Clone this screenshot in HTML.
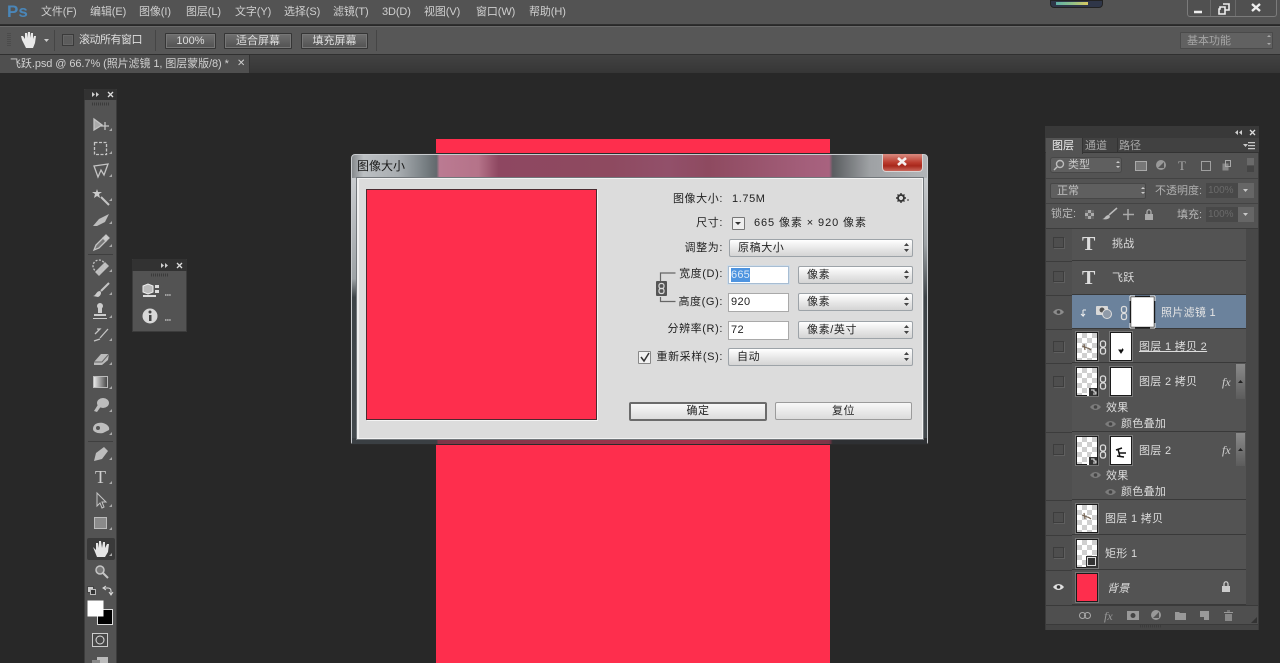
<!DOCTYPE html>
<html lang="zh"><head><meta charset="utf-8"><title>飞跃.psd</title>
<style>
html,body{margin:0;padding:0;width:1280px;height:663px;overflow:hidden;background:#282828}
body{position:relative;font-family:"Liberation Sans","Noto Sans CJK SC",sans-serif;filter:blur(.35px)}
div,span{position:absolute;box-sizing:border-box}
.t{white-space:nowrap;font-size:11px;line-height:14px;color:#cfcfcf}
.d{color:#222;font-size:11px;line-height:14px;white-space:nowrap;letter-spacing:.6px}
.r{text-align:right}
.btn{background:linear-gradient(#6f6f6f,#525252);border:1px solid #353535;box-shadow:inset 0 0 0 1px #767676;color:#ddd;font-size:11px;line-height:14px;text-align:center;border-radius:1px}
.sel{background:linear-gradient(#fff,#e6e6e6 55%,#d4d4d4);border:1px solid #9da3a8;border-radius:2px;color:#222;font-size:11px;line-height:16px;padding-left:8px;letter-spacing:.6px;white-space:nowrap}
.inp{background:#fff;border:1px solid #a9a9a9;color:#222;font-size:11px;line-height:16px;padding-left:2px;letter-spacing:.4px}
.ck{left:1053px;width:11px;height:11px;border:1px solid #3d3d3d;background:#4e4e4e;box-shadow:1px 1px 0 #5f5f5f}
.row{left:1072px;width:174px;background:#535353;border-bottom:1px solid #393939}
.th{width:22px;height:29px;background-color:#fff;border:1px solid #1c1c1c;box-shadow:0 0 0 1px #777}
.chk{background-image:conic-gradient(#cfcfcf 25%,#fff 0 50%,#cfcfcf 0 75%,#fff 0);background-size:10px 10px}
.ly{font-size:11px;line-height:14px;color:#dcdcdc;white-space:nowrap;letter-spacing:.3px}
</style></head><body>

<!-- menu bar -->
<div style="left:0;top:0;width:1280px;height:25px;background:#535353;border-bottom:1px solid #2f2f2f"></div>
<div class="t" style="left:7px;top:1px;font-size:17px;line-height:22px;font-weight:bold;color:#4a86b8">Ps</div>
<span class="t" style="left:41px;top:5px;letter-spacing:-.1px">文件(F)</span>
<span class="t" style="left:90px;top:5px;letter-spacing:-.1px">编辑(E)</span>
<span class="t" style="left:139px;top:5px;letter-spacing:-.1px">图像(I)</span>
<span class="t" style="left:186px;top:5px;letter-spacing:-.1px">图层(L)</span>
<span class="t" style="left:235px;top:5px;letter-spacing:-.1px">文字(Y)</span>
<span class="t" style="left:284px;top:5px;letter-spacing:-.1px">选择(S)</span>
<span class="t" style="left:333px;top:5px;letter-spacing:-.1px">滤镜(T)</span>
<span class="t" style="left:382px;top:5px;letter-spacing:-.1px">3D(D)</span>
<span class="t" style="left:424px;top:5px;letter-spacing:-.1px">视图(V)</span>
<span class="t" style="left:476px;top:5px;letter-spacing:-.1px">窗口(W)</span>
<span class="t" style="left:529px;top:5px;letter-spacing:-.1px">帮助(H)</span>
<div style="left:1050px;top:0;width:53px;height:8px;background:#2f3648;border-radius:0 0 4px 4px;border:1px solid #222"></div>
<div style="left:1056px;top:2px;width:32px;height:3px;background:linear-gradient(90deg,#5fb0a8,#8fc08a,#d8c860)"></div>
<div style="left:1187px;top:0;width:90px;height:17px;background:#505050;border:1px solid #7b7b7b;border-top:0;border-radius:0 0 3px 3px"></div>
<div style="left:1210px;top:0;width:1px;height:16px;background:#6a6a6a"></div>
<div style="left:1235px;top:0;width:1px;height:16px;background:#6a6a6a"></div>

<!-- options bar -->
<div style="left:0;top:26px;width:1280px;height:29px;background:#575757;border-top:1px solid #6a6a6a;border-bottom:1px solid #303030"></div>
<div style="left:54px;top:30px;width:1px;height:21px;background:#454545"></div>
<div style="left:155px;top:30px;width:1px;height:21px;background:#454545"></div>
<div style="left:376px;top:30px;width:1px;height:21px;background:#454545"></div>
<div style="left:62px;top:34px;width:12px;height:12px;background:#5c5c5c;border:1px solid #3a3a3a;box-shadow:inset 0 0 0 1px #666"></div>
<span class="t" style="left:79px;top:33px;letter-spacing:-.5px;color:#dedede">滚动所有窗口</span>
<div class="btn" style="left:165px;top:33px;width:51px;height:16px;line-height:15px">100%</div>
<div class="btn" style="left:224px;top:33px;width:68px;height:16px;line-height:14px">适合屏幕</div>
<div class="btn" style="left:301px;top:33px;width:67px;height:16px;line-height:14px">填充屏幕</div>
<div style="left:1180px;top:32px;width:93px;height:17px;background:#616161;border:1px solid #4a4a4a;border-radius:1px"></div>
<span class="t" style="left:1187px;top:34px;color:#a5a5a5">基本功能</span>

<!-- tabs -->
<div style="left:0;top:55px;width:1280px;height:18px;background:linear-gradient(#424242,#363636)"></div>
<div style="left:0;top:55px;width:250px;height:18px;background:#4f4f4f;border-right:1px solid #333"></div>
<span class="t" style="left:10px;top:57px;color:#d0d0d0;letter-spacing:-.08px">飞跃.psd @ 66.7% (照片滤镜 1, 图层蒙版/8) *</span>
<span class="t" style="left:237px;top:57px;font-size:10px">✕</span>

<!-- canvas image -->
<div style="left:436px;top:139px;width:394px;height:524px;background:#fe2e4d"></div>

<!-- toolbar -->
<div style="left:84px;top:89px;width:33px;height:574px;background:#535353;border-left:1px solid #3c3c3c;border-right:1px solid #3c3c3c"></div>
<div style="left:84px;top:89px;width:33px;height:11px;background:#323232;border-radius:2px 2px 0 0"></div>
<div style="left:88px;top:254px;width:25px;height:1px;background:#3f3f3f"></div>
<div style="left:88px;top:441px;width:25px;height:1px;background:#3f3f3f"></div>
<div style="left:87px;top:538px;width:28px;height:22px;background:#3a3a3a;border-radius:2px"></div>

<!-- mini panel -->
<div style="left:132px;top:259px;width:55px;height:73px;background:#535353;border:1px solid #3c3c3c"></div>
<div style="left:132px;top:259px;width:55px;height:12px;background:#323232;border-radius:2px 2px 0 0"></div>

<!-- layers panel -->
<div style="left:1045px;top:126px;width:214px;height:504px;background:#535353;border:1px solid #3b3b3b"></div>
<div style="left:1045px;top:126px;width:214px;height:12px;background:#393939"></div>
<div style="left:1045px;top:138px;width:214px;height:15px;background:#414141;border-bottom:1px solid #333"></div>
<div style="left:1046px;top:138px;width:37px;height:16px;background:#535353;border-right:1px solid #333"></div>
<div style="left:1083px;top:138px;width:35px;height:15px;border-right:1px solid #333"></div>
<span class="t" style="left:1052px;top:139px;color:#eee;font-size:11px">图层</span>
<span class="t" style="left:1085px;top:139px;color:#a8a8a8;font-size:11px">通道</span>
<span class="t" style="left:1119px;top:139px;color:#a8a8a8;font-size:11px">路径</span>
<div style="left:1050px;top:157px;width:72px;height:16px;background:#5f5f5f;border:1px solid #474747;border-radius:3px"></div>
<span class="t" style="left:1068px;top:158px;color:#c8c8c8">类型</span>
<div style="left:1046px;top:178px;width:212px;height:1px;background:#434343"></div>
<div style="left:1050px;top:183px;width:96px;height:16px;background:#5f5f5f;border:1px solid #474747;border-radius:2px"></div>
<span class="t" style="left:1057px;top:184px;color:#c0c0c0">正常</span>
<span class="t" style="left:1155px;top:184px;color:#b0b0b0">不透明度:</span>
<div style="left:1206px;top:183px;width:32px;height:15px;background:#484848"></div>
<span class="t" style="left:1208px;top:184px;color:#6a6a6a;font-size:10px">100%</span>
<div style="left:1238px;top:183px;width:16px;height:15px;background:#666"></div>
<div style="left:1046px;top:203px;width:212px;height:1px;background:#434343"></div>
<span class="t" style="left:1051px;top:207px;color:#b8b8b8">锁定:</span>
<span class="t" style="left:1177px;top:208px;color:#b8b8b8">填充:</span>
<div style="left:1206px;top:207px;width:32px;height:15px;background:#484848"></div>
<span class="t" style="left:1208px;top:208px;color:#6a6a6a;font-size:10px">100%</span>
<div style="left:1238px;top:207px;width:16px;height:15px;background:#666"></div>
<div style="left:1046px;top:228px;width:212px;height:1px;background:#3c3c3c"></div>

<div style="left:1046px;top:229px;width:26px;height:376px;background:#4f4f4f"></div>
<div style="left:1246px;top:229px;width:12px;height:376px;background:#484848"></div>
<div style="left:1072px;top:229px;width:1px;height:376px;background:#3a3a3a"></div>

<div class="row" style="top:229px;height:32px"></div>
<div class="row" style="top:261px;height:34px"></div>
<div class="row" style="top:295px;height:34px;background:#6b829c"></div>
<div class="row" style="top:329px;height:34px"></div>
<div class="row" style="top:363px;height:69px"></div>
<div class="row" style="top:432px;height:68px"></div>
<div class="row" style="top:500px;height:35px"></div>
<div class="row" style="top:535px;height:35px"></div>
<div class="row" style="top:570px;height:35px"></div>
<div style="left:1046px;top:261px;width:26px;height:1px;background:#3c3c3c"></div>
<div style="left:1046px;top:295px;width:26px;height:1px;background:#3c3c3c"></div>
<div style="left:1046px;top:329px;width:26px;height:1px;background:#3c3c3c"></div>
<div style="left:1046px;top:363px;width:26px;height:1px;background:#3c3c3c"></div>
<div style="left:1046px;top:432px;width:26px;height:1px;background:#3c3c3c"></div>
<div style="left:1046px;top:500px;width:26px;height:1px;background:#3c3c3c"></div>
<div style="left:1046px;top:535px;width:26px;height:1px;background:#3c3c3c"></div>
<div style="left:1046px;top:570px;width:26px;height:1px;background:#3c3c3c"></div>

<div class="ck" style="top:237px"></div>
<div class="ck" style="top:271px"></div>
<div class="ck" style="top:341px"></div>
<div class="ck" style="top:376px"></div>
<div class="ck" style="top:444px"></div>
<div class="ck" style="top:512px"></div>
<div class="ck" style="top:547px"></div>

<span class="ly" style="left:1112px;top:237px">挑战</span>
<span class="ly" style="left:1112px;top:271px">飞跃</span>
<span class="ly" style="left:1161px;top:306px;color:#e4e4e4">照片滤镜 1</span>

<div class="th chk" style="left:1076px;top:332px"></div>
<div class="th" style="left:1110px;top:332px"></div>
<span class="ly" style="left:1139px;top:340px;text-decoration:underline">图层 1 拷贝 2</span>
<div class="th chk" style="left:1076px;top:367px"></div>
<div class="th" style="left:1110px;top:367px"></div>
<span class="ly" style="left:1139px;top:375px">图层 2 拷贝</span>
<span class="ly" style="left:1106px;top:401px">效果</span>
<span class="ly" style="left:1121px;top:417px">颜色叠加</span>
<div class="th chk" style="left:1076px;top:436px"></div>
<div class="th" style="left:1110px;top:436px"></div>
<span class="ly" style="left:1139px;top:444px">图层 2</span>
<span class="ly" style="left:1106px;top:469px">效果</span>
<span class="ly" style="left:1121px;top:485px">颜色叠加</span>
<div class="th chk" style="left:1076px;top:504px"></div>
<span class="ly" style="left:1105px;top:512px">图层 1 拷贝</span>
<div class="th chk" style="left:1076px;top:539px"></div>
<span class="ly" style="left:1105px;top:547px">矩形 1</span>
<div class="th" style="left:1076px;top:573px;background:#fe2e4d"></div>
<span class="ly" style="left:1107px;top:582px;font-style:italic">背景</span>
<div style="left:1236px;top:364px;width:9px;height:35px;background:linear-gradient(#8a8a8a,#5c5c5c)"></div>
<div style="left:1236px;top:433px;width:9px;height:33px;background:linear-gradient(#8a8a8a,#5c5c5c)"></div>
<div style="left:1046px;top:605px;width:212px;height:20px;background:#4f4f4f;border-top:1px solid #3a3a3a"></div>
<div style="left:1046px;top:624px;width:212px;height:6px;background:#454545;border-top:1px solid #3a3a3a"></div>

<!-- dialog -->
<div style="left:351px;top:154px;width:577px;height:290px;border:1px solid #c8cbce;border-radius:4px 4px 2px 2px;box-shadow:0 0 0 1px #2b2b2b;background:linear-gradient(90deg,#85898c 0,#bcc0c3 2%,#a9adb1 8%,#7f868a 12%,#62696d 14.7%,#bb7a92 15.2%,#b57389 22%,#8e4761 25.5%,#8e4a60 45%,#92506a 55%,#8e4a60 62%,#a5607c 80%,#a8627f 83%,#5a5d60 83.6%,#9ea1a4 90%,#b2b5b8 100%)"></div>
<div style="left:352px;top:178px;width:5px;height:265px;background:linear-gradient(#c9cccf,#9ea3a6 38%,#3d4347 45%,#42484c 100%)"></div>
<div style="left:923px;top:178px;width:4px;height:265px;background:linear-gradient(#c9cccf,#9ea3a6 25%,#3d4347 45%,#42484c 100%)"></div>
<div style="left:352px;top:438px;width:575px;height:6px;background:linear-gradient(90deg,#3a3f43 0,#3a3f43 14.7%,#7c3648 15%,#a8324c 60%,#7c3648 83%,#2e3033 83.6%)"></div>
<div style="left:357px;top:178px;width:566px;height:261px;background:#dcdcdc;border:1px solid #f2f2f2;border-left:2px solid #f0f0f0;box-shadow:0 0 0 1px #72777b"></div>
<span class="t" style="left:357px;top:158px;color:#1a1a1a;font-size:12px;line-height:16px">图像大小</span>
<div style="left:882px;top:154px;width:41px;height:18px;border:1px solid #d9d3d3;border-top:0;border-radius:0 0 4px 4px;background:linear-gradient(#d98b80,#bb3c2e 50%,#a8281c 70%,#c9675b)"></div>
<div style="left:366px;top:189px;width:231px;height:231px;background:#fe2e4d;border:1px solid #4c2a30;box-shadow:1px 1px 0 #f4f4f4"></div>

<span class="d r" style="left:640px;width:83px;top:192px">图像大小:</span>
<span class="d" style="left:732px;top:192px">1.75M</span>
<span class="d r" style="left:640px;width:83px;top:216px">尺寸:</span>
<div style="left:732px;top:217px;width:13px;height:13px;background:#eee;border:1px solid #777;border-radius:1px"></div>
<span class="d" style="left:754px;top:216px;letter-spacing:.9px">665 像素 × 920 像素</span>
<span class="d r" style="left:640px;width:83px;top:241px">调整为:</span>
<div class="sel" style="left:729px;top:239px;width:184px;height:18px">原稿大小</div>
<span class="d r" style="left:640px;width:83px;top:267px">宽度(D):</span>
<div class="inp" style="left:728px;top:266px;width:61px;height:18px;border-color:#a7bdd3;box-shadow:0 0 0 1px #cfdbe6"></div>
<div style="left:731px;top:268px;width:19px;height:14px;background:#4e94e0"></div>
<span class="d" style="left:731px;top:268px;color:#dbe9f8;letter-spacing:.2px">665</span>
<div class="sel" style="left:798px;top:266px;width:115px;height:18px">像素</div>
<span class="d r" style="left:640px;width:83px;top:295px">高度(G):</span>
<div class="inp" style="left:728px;top:293px;width:61px;height:19px">920</div>
<div class="sel" style="left:798px;top:293px;width:115px;height:18px">像素</div>
<span class="d r" style="left:640px;width:83px;top:322px">分辨率(R):</span>
<div class="inp" style="left:728px;top:321px;width:61px;height:19px">72</div>
<div class="sel" style="left:798px;top:321px;width:115px;height:18px">像素/英寸</div>
<div style="left:638px;top:351px;width:13px;height:13px;background:#f2f2f2;border:1px solid #888;border-radius:1px"></div>
<span class="d r" style="left:640px;width:83px;top:350px">重新采样(S):</span>
<div class="sel" style="left:728px;top:348px;width:185px;height:18px">自动</div>
<div style="left:629px;top:402px;width:138px;height:19px;background:linear-gradient(#f8f8f8,#dcdcdc);border:2px solid #6b6b6b;border-radius:2px;color:#222;font-size:11px;line-height:15px;text-align:center;letter-spacing:.5px">确定</div>
<div style="left:775px;top:402px;width:137px;height:18px;background:linear-gradient(#f8f8f8,#dcdcdc);border:1px solid #9b9b9b;border-radius:2px;color:#222;font-size:11px;line-height:16px;text-align:center;letter-spacing:.5px">复位</div>

<!-- icons -->
<svg width="1280" height="663" viewBox="0 0 1280 663" style="position:absolute;left:0;top:0">
<g fill="none" stroke="#eee" stroke-width="1.6">
<path d="M1194 12h8" stroke-width="2.500"/>
<path d="M1220 7h5v7h-6v-5h1zM1223 4h6v6h-4"/>
<path d="M1252 4l8 7M1260 4l-8 7" stroke-width="2.400"/>
</g>
<!-- option hand -->
<path d="M22 40l-1-4 2 0 2 3 0-6 2 0 0 5 1-6 2 0 0 6 1-5 2 0 0 6 1-3 2 0-1 7-2 5h-7z" fill="#e8e8e8"/>
<path d="M44 39h5l-2.500 3z" fill="#ccc"/>
<path d="M1267 37l2-2 2 2zM1267 43l2 2 2-2z" fill="#aaa"/>
<path d="M8 33v14M10 33v14" stroke="#3f3f3f" stroke-dasharray="1 1"/>
<!-- headers -->
<g fill="#cfcfcf">
<path d="M92 92l3 2.500-3 2.500zM96 92l3 2.500-3 2.500zM161 263l3 2.500-3 2.500zM165 263l3 2.500-3 2.500zM1238 130l-3 2.500 3 2.500zM1242 130l-3 2.500 3 2.500z"/>
</g>
<g stroke="#ddd" stroke-width="1.300" fill="none">
<path d="M108 92l5 5M113 92l-5 5M177 263l5 5M182 263l-5 5M1250 130l5 5M1255 130l-5 5"/>
</g>
<path d="M92 104h18M151 275h17M1140 626h22" stroke="#3b3b3b" stroke-width="3" stroke-dasharray="1 1"/>
<!-- tools -->
<g fill="none" stroke="#c4c4c4" stroke-width="1.300">
<path d="M94 119l8 6-8 5z" fill="#aaa"/>
<path d="M105 122v8M101 126h8"/>
<rect x="94.500" y="142.500" width="12" height="12" stroke-dasharray="3 1.500"/>
<path d="M94 166l14-2-4 11-3-5-3 7z"/>
<path d="M101 197l8 8" stroke-width="2"/>
<path d="M97 189l1 3 4 0-3 2 1 4-3-2-3 2 1-4-3-2 4 0z" fill="#ccc" stroke="none"/>
<path d="M93 226l6-7 10-5-4 8-8 4z" fill="#bdbdbd" stroke="none"/>
<path d="M94 250l2-5 7-7 3 3-7 7z" fill="#777"/>
<path d="M103 238l3-3 3 3-3 3z" fill="#ccc"/>
<path d="M95 272l10-10 4 4-10 10z" fill="#bdbdbd" stroke="none"/>
<circle cx="99" cy="266" r="6" stroke-dasharray="2 1.500"/>
<path d="M109 283l-8 8" stroke-width="2"/>
<path d="M93 296c3 0 3-5 7-5 2 1 1 5-2 6z" fill="#ccc" stroke="none"/>
<circle cx="100" cy="306" r="3" fill="#ccc" stroke="none"/>
<path d="M98 308h4v5h-4zM94 314h12v2h-12zM93 318h14v1h-14z" fill="#ccc" stroke="none"/>
<path d="M95 334l5-5h-3M108 329l-8 9M94 341l6-2"/>
<path d="M94 362l7-8h8l-1 6-6 5h-8z" fill="#bbb" stroke="none"/>
<path d="M94 362h8l7-8" stroke="#666" stroke-width="1"/>
</g>
<defs><linearGradient id="g"><stop offset="0" stop-color="#eee"/><stop offset="1" stop-color="#444"/></linearGradient></defs>
<rect x="93.500" y="376.500" width="14" height="11" fill="url(#g)" stroke="#bbb"/>
<g fill="#bdbdbd">
<ellipse cx="103" cy="403" rx="6" ry="5"/>
<path d="M94 411l5-8 3 2-5 7z"/>
<path d="M93 429c0-5 5-7 10-6 4 1 7 4 6 7l-6 3c-5 1-10-1-10-4z"/>
<circle cx="98" cy="428" r="2" fill="#555"/>
<path d="M94 461l2-8 8-6 4 4-6 8z"/>
<path d="M93 547l3 3 0-7 2 0 1 5 0-7 2 0 1 7 1-6 2 0 0 6 2-4 2 0-1 8-3 5h-8z" fill="#e4e4e4"/>
</g>
<text x="95" y="483" font-family="Liberation Serif,serif" font-size="18" fill="#cfcfcf">T</text>
<path d="M97 493v13l3-3 2 5 2-1-2-5h4z" fill="#555" stroke="#c4c4c4"/>
<rect x="94.500" y="517.500" width="12" height="11" fill="#8a8a8a" stroke="#bbb"/>
<circle cx="100" cy="570" r="4" fill="#777" stroke="#c4c4c4" stroke-width="1.500"/>
<path d="M103 573l5 5" stroke="#c4c4c4" stroke-width="2"/>
<path d="M112 131l-3 0 3-3zM112 154l-3 0 3-3zM112 177l-3 0 3-3zM112 201l-3 0 3-3zM112 224l-3 0 3-3zM112 247l-3 0 3-3zM112 272l-3 0 3-3zM112 295l-3 0 3-3zM112 318l-3 0 3-3zM112 341l-3 0 3-3zM112 365l-3 0 3-3zM112 389l-3 0 3-3zM112 412l-3 0 3-3zM112 435l-3 0 3-3zM112 460l-3 0 3-3zM112 484l-3 0 3-3zM112 507l-3 0 3-3zM112 530l-3 0 3-3zM112 556l-3 0 3-3z" fill="#aaa"/>
<!-- swatches -->
<rect x="87.500" y="586.500" width="6" height="6" fill="#ccc" stroke="#444"/>
<rect x="90.500" y="589.500" width="5" height="5" fill="#333" stroke="#bbb"/>
<path d="M104 588h4c2 0 3 1 3 3v3M106 586l-3 2 3 2M109 592l2 3 2-3" stroke="#ddd" fill="none"/>
<rect x="97.500" y="609.500" width="15" height="15" fill="#000" stroke="#ddd"/>
<rect x="87.500" y="600.500" width="16" height="16" fill="#fff"/>
<rect x="92.500" y="633.500" width="15" height="13" fill="#484848" stroke="#ccc"/>
<circle cx="100" cy="640" r="4" fill="none" stroke="#ddd"/>
<rect x="97" y="657" width="11" height="6" fill="#bbb"/><rect x="92" y="660" width="8" height="3" fill="#888"/>
<!-- mini panel icons -->
<path d="M143 286l5-2 5 2v6l-5 2-5-2z" fill="#bbb" stroke="#eee"/>
<path d="M155 285h4v3h-4zM155 290h4v3h-4z" fill="#ddd"/><path d="M143 295h13v2h-13z" fill="#ddd"/>
<circle cx="150" cy="316" r="7.500" fill="#d8d8d8"/><rect x="149" y="315" width="2.500" height="6" fill="#444"/><circle cx="150" cy="312" r="1.500" fill="#444"/>
<path d="M165 295h6M165 320h6" stroke="#bbb" stroke-width="1.600" stroke-dasharray="1.500 .6"/>
<!-- layers top icons -->
<circle cx="1060" cy="164" r="3.500" fill="none" stroke="#bbb" stroke-width="1.400"/><path d="M1057 167l-3 3" stroke="#bbb" stroke-width="1.400"/>
<path d="M1116 163l2-2 2 2zM1116 166l2 2 2-2zM1141 189l2-2 2 2zM1141 192l2 2 2-2z" fill="#ccc"/>
<rect x="1135.500" y="161.500" width="11" height="9" fill="#777" stroke="#aaa"/>
<circle cx="1161" cy="165" r="5" fill="#999"/><path d="M1158 168l6-6v6z" fill="#555"/>
<text x="1178" y="170" font-family="Liberation Serif,serif" font-size="13" fill="#a8a8a8">T</text>
<rect x="1201.500" y="161.500" width="9" height="9" fill="none" stroke="#a0a0a0"/>
<rect x="1222.500" y="163.500" width="6" height="7" fill="#888"/><rect x="1225.500" y="160.500" width="5" height="6" fill="none" stroke="#aaa"/>
<rect x="1247" y="158" width="7" height="7" fill="#6a6a6a"/><rect x="1247" y="166" width="7" height="6" fill="#454545"/>
<path d="M1243 144h5l-2.500 3z M1248 142h7v1.200h-7zM1248 145h7v1.200h-7zM1248 148h7v1.200h-7z" fill="#c8c8c8"/>
<path d="M1243 189h5l-2.500 3zM1243 213h5l-2.500 3z" fill="#c8c8c8"/>
<!-- lock icons -->
<rect x="1085" y="210" width="9" height="9" fill="#aaa"/><path d="M1085 210h3v3h-3zM1091 210h3v3h-3zM1088 213h3v3h-3zM1085 216h3v3h-3zM1091 216h3v3h-3z" fill="#666"/>
<path d="M1117 208l-8 7" stroke="#bbb" stroke-width="1.500"/><path d="M1102 219c3 0 3-4 7-4l1 2c-1 2-4 3-8 2z" fill="#bbb"/>
<path d="M1128 209v11M1123 214.500h11" stroke="#aaa" stroke-width="1.500"/>
<rect x="1145" y="214" width="8" height="6" fill="#aaa"/><path d="M1147 214v-2c0-3 4-3 4 0v2" fill="none" stroke="#aaa" stroke-width="1.300"/>
<!-- layer T icons -->
<text x="1082" y="250" font-family="Liberation Serif,serif" font-size="20" font-weight="bold" fill="#ddd">T</text>
<text x="1082" y="284" font-family="Liberation Serif,serif" font-size="20" font-weight="bold" fill="#ddd">T</text>
<!-- selected layer row -->
<path d="M1083 310v6l-2-2M1083 316l2-2M1083 310h3" stroke="#eee" fill="none"/>
<rect x="1096" y="306" width="12" height="9" rx="1" fill="#d8d8d8"/><circle cx="1102" cy="310" r="2.500" fill="#555"/>
<circle cx="1107" cy="314" r="4.500" fill="#8f9aa8" stroke="#ddd"/>
<rect x="1121.500" y="306.500" width="5" height="6" rx="2" fill="none" stroke="#ddd" stroke-width="1.300"/><rect x="1121.500" y="313.500" width="5" height="6" rx="2" fill="none" stroke="#ddd" stroke-width="1.300"/>
<rect x="1130.500" y="296.500" width="24" height="31" fill="#fff" stroke="#1b1b1b" stroke-width="1.400"/>
<path d="M1130 296h5M1150 296h5M1130 328h5M1150 328h5M1130 296v5M1155 296v5M1130 323v5M1155 323v5" stroke="#eee"/>
<!-- link icons for rows -->
<g fill="none" stroke="#ddd" stroke-width="1.300">
<rect x="1100.500" y="341" width="5" height="6" rx="2"/><rect x="1100.500" y="348" width="5" height="6" rx="2"/>
<rect x="1100.500" y="376" width="5" height="6" rx="2"/><rect x="1100.500" y="383" width="5" height="6" rx="2"/>
<rect x="1100.500" y="445" width="5" height="6" rx="2"/><rect x="1100.500" y="452" width="5" height="6" rx="2"/>
</g>
<!-- thumbnail art -->
<path d="M1119 350l4 0-2 3zM1122 349h1" stroke="#111" fill="#111"/>
<path d="M1118 449l2 8M1119 453h7M1116 450l6-2M1117 456l7 1" stroke="#111" stroke-width="1.500"/>
<path d="M1082 346l8 3M1084 344l1 6M1088 348l3 2" stroke="#765" stroke-width="1.200"/>
<path d="M1082 515l8 3M1084 513l1 6M1088 517l3 2" stroke="#765" stroke-width="1.200"/>
<path d="M1087 396v-5h4v-6h6v11z" fill="#fff"/><rect x="1089" y="388" width="8" height="8" fill="#333"/><path d="M1091 390h3v2h2v2h-3" stroke="#eee" fill="none"/>
<path d="M1087 465v-5h4v-6h6v11z" fill="#fff"/><rect x="1089" y="457" width="8" height="8" fill="#333"/><path d="M1091 459h3v2h2v2h-3" stroke="#eee" fill="none"/>
<rect x="1086" y="556" width="12" height="12" fill="#333"/><rect x="1087.500" y="557.500" width="8" height="8" fill="none" stroke="#ddd"/>
<!-- fx -->
<g font-family="Liberation Serif,serif" font-style="italic" font-size="12" fill="#cfcfcf">
<text x="1222" y="386">fx</text><text x="1222" y="454">fx</text>
</g>
<path d="M1238 383l2.500-3 2.500 3zM1238 451l2.500-3 2.500 3z" fill="#222"/>
<!-- eyes -->
<g>
<path d="M1053 312c3-4 8-4 11 0-3 4-8 4-11 0z" fill="#8c8c8c"/><circle cx="1058.500" cy="312" r="1.800" fill="#444"/>
<path d="M1090 407c3-4 8-4 11 0-3 4-8 4-11 0z" fill="#7c7c7c"/><circle cx="1095.500" cy="407" r="1.800" fill="#444"/>
<path d="M1105 424c3-4 8-4 11 0-3 4-8 4-11 0z" fill="#7c7c7c"/><circle cx="1110.500" cy="424" r="1.800" fill="#444"/>
<path d="M1090 475c3-4 8-4 11 0-3 4-8 4-11 0z" fill="#7c7c7c"/><circle cx="1095.500" cy="475" r="1.800" fill="#444"/>
<path d="M1105 492c3-4 8-4 11 0-3 4-8 4-11 0z" fill="#7c7c7c"/><circle cx="1110.500" cy="492" r="1.800" fill="#444"/>
<path d="M1053 587c3-4 8-4 11 0-3 4-8 4-11 0z" fill="#e0e0e0"/><circle cx="1058.500" cy="587" r="1.800" fill="#333"/>
</g>
<rect x="1222" y="586" width="8" height="6" fill="#ccc"/><path d="M1224 586v-2c0-3 4-3 4 0v2" fill="none" stroke="#ccc" stroke-width="1.300"/>
<!-- layers footer -->
<g fill="#999" stroke="none">
<rect x="1079.500" y="612.500" width="6" height="6" rx="3" fill="none" stroke="#aaa"/><rect x="1084.500" y="612.500" width="6" height="6" rx="3" fill="none" stroke="#aaa"/>
<text x="1104" y="620" font-family="Liberation Serif,serif" font-style="italic" font-size="12">fx</text>
<rect x="1127" y="611" width="12" height="9"/><circle cx="1133" cy="615.500" r="2.500" fill="#444"/>
<circle cx="1156" cy="615" r="5"/><path d="M1153 618l6-6v6z" fill="#555"/>
<path d="M1175 612h4l1 1h6v7h-11z"/>
<path d="M1200 611h9v9h-5v-3h-4z"/>
<path d="M1225 614h7v7h-7z" fill="#888"/><path d="M1224 612.500h9M1227 611h3" stroke="#999"/>
</g>
<path d="M1251 623l6-6v6z" fill="#333"/>
<!-- dialog icons -->
<path d="M898 158l8 7M906 158l-8 7" stroke="#f4f0f0" stroke-width="2.600"/>
<circle cx="901" cy="198" r="3" fill="none" stroke="#333" stroke-width="1.800"/>
<path d="M901 193v2M901 201v2M896 198h2M904 198h2M897.500 194.500l1.500 1.500M903 200l1.500 1.500M904.500 194.500l-1.500 1.500M899 200l-1.500 1.500" stroke="#333" stroke-width="1.400"/>
<path d="M907 200h2" stroke="#333"/>
<path d="M735 222h6l-3 3z" fill="#333"/>
<g fill="#444">
<path d="M904 246l2.500-3 2.500 3zM904 249l2.500 3 2.500-3zM904 273l2.500-3 2.500 3zM904 276l2.500 3 2.500-3zM904 300l2.500-3 2.500 3zM904 303l2.500 3 2.500-3zM904 328l2.500-3 2.500 3zM904 331l2.500 3 2.500-3zM904 355l2.500-3 2.500 3zM904 358l2.500 3 2.500-3z"/>
</g>
<path d="M660.500 281v-8h15M660.500 297v4.500h15" fill="none" stroke="#666" stroke-width="1.200"/>
<rect x="656" y="281" width="11" height="15" fill="#555" rx="1"/>
<rect x="659" y="283.500" width="5" height="5" rx="2" fill="none" stroke="#ddd" stroke-width="1.200"/><rect x="659" y="288.500" width="5" height="5" rx="2" fill="none" stroke="#ddd" stroke-width="1.200"/>
<path d="M641 357l3 4 5-8" fill="none" stroke="#333" stroke-width="1.500"/>
</svg>
</body></html>
